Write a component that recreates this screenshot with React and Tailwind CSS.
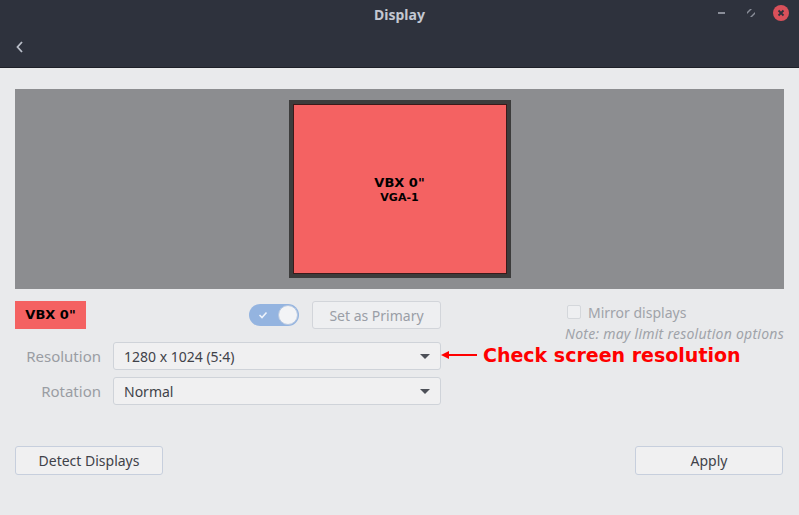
import React from "react";

export default function App() {
  const font = { fontFamily: '"Noto Sans", "Open Sans", sans-serif' };
  const dv = { fontFamily: '"DejaVu Sans", "Noto Sans", sans-serif' };
  return (
    <div className="w-[799px] h-[515px] bg-[#e9eaec] flex flex-col overflow-hidden" style={font}>
      {/* header */}
      <div className="h-[68px] bg-[#2e323d] border-b border-[#1e2028] relative flex flex-col">
        <div className="h-[28px] flex items-center justify-center">
          <span className="text-[14px] font-bold text-[#c3c8d2]">Display</span>
        </div>
        <div className="absolute right-[10px] top-[5px] flex items-center gap-[14px]">
          <div className="w-[16px] h-[16px] flex items-center justify-center">
            <div className="w-[7px] h-[2px] bg-[#8a8e99]" />
          </div>
          <div className="w-[16px] h-[16px] flex items-center justify-center">
            <svg width="8" height="8" viewBox="0 0 8 8">
              <path d="M0 3 L3 0 L5 0 L0 5 Z" fill="#8a8e99" />
              <path d="M8 5 L5 8 L3 8 L8 3 Z" fill="#8a8e99" />
            </svg>
          </div>
          <div className="w-[16px] h-[16px] rounded-full bg-[#d9505a] flex items-center justify-center">
            <svg width="8" height="8" viewBox="0 0 8 8">
              <path d="M1.5 1.5 L6.5 6.5 M6.5 1.5 L1.5 6.5" stroke="#2e323d" strokeWidth="1.8" />
            </svg>
          </div>
        </div>
        <div className="flex-1 flex items-center pl-[15px] pb-[2px]">
          <svg width="10" height="14" viewBox="0 0 10 14">
            <path d="M7 2 L2.5 7 L7 12" stroke="#b9bec8" strokeWidth="1.8" fill="none" />
          </svg>
        </div>
      </div>

      {/* preview */}
      <div className="mx-[15px] mt-[21px] h-[200px] bg-[#8c8d90] flex items-start justify-center pt-[11px]">
        <div className="w-[222px] h-[178px] bg-[#3c3c3c] p-[4px]">
          <div className="w-full h-full bg-[#f46262] border border-[#3a1a1a] flex flex-col items-center justify-center text-black font-bold" style={dv}>
            <span className="text-[13px] leading-[16px]">VBX 0"</span>
            <span className="text-[11px] leading-[13px]">VGA-1</span>
          </div>
        </div>
      </div>

      {/* controls */}
      <div className="flex mt-[12px] px-[15px]">
        <div className="w-[427px] flex flex-col">
          <div className="flex items-center h-[28px]">
            <div className="w-[71px] h-[28px] bg-[#f46262] flex items-center justify-center text-[13px] font-bold text-black" style={dv}>VBX 0"</div>
            <div className="ml-[163px] w-[50px] h-[22px] rounded-full bg-[#94b4e0] flex items-center justify-between pl-[9px] pr-[1px]">
              <svg width="10" height="8" viewBox="0 0 10 8">
                <path d="M1.5 4 L4 6.5 L8.5 1.5" stroke="#eef3fb" strokeWidth="1.6" fill="none" />
              </svg>
              <div className="w-[20px] h-[20px] rounded-full bg-[#f3f4f6] border border-[#b8c8e0]" />
            </div>
            <div className="ml-[13px] w-[129px] h-[28px] border border-[#d2d5da] rounded-[3px] bg-[#eeeff1] flex items-center justify-center text-[14px] text-[#9a9ea6]">
              Set as Primary
            </div>
          </div>
          <div className="flex items-center mt-[13px]">
            <div className="w-[86px] text-right text-[15px] text-[#9a9da3]">Resolution</div>
            <div className="ml-[12px] w-[328px] h-[28px] border border-[#cfd3d9] rounded-[3px] bg-[#f0f0f1] flex items-center justify-between pl-[10px] pr-[10px] text-[14px] text-[#3f4249]">
              <span>1280 x 1024 (5:4)</span>
              <svg width="10" height="5" viewBox="0 0 10 5"><path d="M0 0 L10 0 L5 5 Z" fill="#4d5058" /></svg>
            </div>
          </div>
          <div className="flex items-center mt-[7px]">
            <div className="w-[86px] text-right text-[15px] text-[#9a9da3]">Rotation</div>
            <div className="ml-[12px] w-[328px] h-[28px] border border-[#cfd3d9] rounded-[3px] bg-[#f0f0f1] flex items-center justify-between pl-[10px] pr-[10px] text-[14px] text-[#3f4249]">
              <span>Normal</span>
              <svg width="10" height="5" viewBox="0 0 10 5"><path d="M0 0 L10 0 L5 5 Z" fill="#4d5058" /></svg>
            </div>
          </div>
        </div>
        <div className="flex-1 flex flex-col">
          <div className="flex items-center ml-[125px] mt-[1px] h-[20px]">
            <div className="w-[14px] h-[14px] rounded-[2px] border border-[#d4d7db] bg-[#eeeff1]" />
            <span className="ml-[7px] text-[14px] text-[#a0a3a9]">Mirror displays</span>
          </div>
          <div className="ml-[123px] mt-[2px] h-[20px] flex items-center text-[14px] leading-[20px] italic text-[#a0a3a9] whitespace-nowrap tracking-[0.25px]">Note: may limit resolution options</div>
          <div className="flex items-center mt-[0px] h-[22px]">
            <svg width="38" height="10" viewBox="0 0 38 10" className="ml-[-1px]">
              <path d="M0 5 L8 1 L8 4 L36 4 L36 6 L8 6 L8 9 Z" fill="#ff0000" />
            </svg>
            <span className="ml-[4px] text-[19px] leading-[22px] font-bold text-[#ff0000] whitespace-nowrap" style={dv}>Check screen resolution</span>
          </div>
        </div>
      </div>

      {/* bottom buttons */}
      <div className="flex justify-between pl-[15px] pr-[16px] mt-[41px]">
        <div className="w-[148px] h-[29px] border border-[#c7cfdd] rounded-[3px] bg-[#f0f0f1] flex items-center justify-center text-[14px] text-[#3f4249]">Detect Displays</div>
        <div className="w-[148px] h-[29px] border border-[#c7cfdd] rounded-[3px] bg-[#f0f0f1] flex items-center justify-center text-[14px] text-[#3f4249]">Apply</div>
      </div>
    </div>
  );
}
